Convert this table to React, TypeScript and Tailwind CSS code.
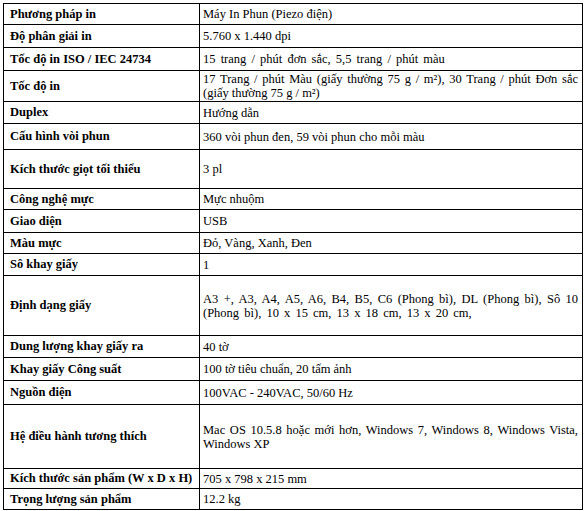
const rows: { label: string; h: string; value: React.ReactNode }[] = [
  { label: 'Phương pháp in', h: 'h-[21px]', value: 'Máy In Phun (Piezo điện)' },
  { label: 'Độ phân giải in', h: 'h-[23px]', value: '5.760 x 1.440 dpi' },
  {
    label: 'Tốc độ in ISO / IEC 24734',
    h: 'h-[23px]',
    value: <div className="[word-spacing:2px]">15 trang / phút đơn sắc, 5,5 trang / phút màu</div>,
  },
  {
    label: 'Tốc độ in',
    h: 'h-[31px]',
    value: (
      <>
        <div className="text-justify [text-align-last:justify]">17 Trang / phút Màu (giấy thường 75 g / m²), 30 Trang / phút Đơn sắc</div>
        <div>(giấy thường 75 g / m²)</div>
      </>
    ),
  },
  { label: 'Duplex', h: 'h-[22px]', value: 'Hướng dẫn' },
  { label: 'Cấu hình vòi phun', h: 'h-[26px]', value: '360 vòi phun đen, 59 vòi phun cho mỗi màu' },
  { label: 'Kích thước giọt tối thiểu', h: 'h-[39px]', value: '3 pl' },
  { label: 'Công nghệ mực', h: 'h-[21px]', value: 'Mực nhuộm' },
  { label: 'Giao diện', h: 'h-[23px]', value: 'USB' },
  { label: 'Màu mực', h: 'h-[21px]', value: 'Đỏ, Vàng, Xanh, Đen' },
  { label: 'Sô khay giấy', h: 'h-[22px]', value: '1' },
  {
    label: 'Định dạng giấy',
    h: 'h-[60px]',
    value: (
      <>
        <div className="text-justify [text-align-last:justify]">A3 +, A3, A4, A5, A6, B4, B5, C6 (Phong bì), DL (Phong bì), Sô 10</div>
        <div className="[word-spacing:2px]">(Phong bì), 10 x 15 cm, 13 x 18 cm, 13 x 20 cm,</div>
      </>
    ),
  },
  { label: 'Dung lượng khay giấy ra', h: 'h-[22px]', value: '40 tờ' },
  { label: 'Khay giấy Công suất', h: 'h-[23px]', value: '100 tờ tiêu chuẩn, 20 tấm ảnh' },
  { label: 'Nguồn điện', h: 'h-[24px]', value: '100VAC - 240VAC, 50/60 Hz' },
  {
    label: 'Hệ điều hành tương thích',
    h: 'h-[64px]',
    value: (
      <>
        <div className="text-justify [text-align-last:justify]">Mac OS 10.5.8 hoặc mới hơn, Windows 7, Windows 8, Windows Vista,</div>
        <div>Windows XP</div>
      </>
    ),
  },
  { label: 'Kích thước sản phẩm (W x D x H)', h: 'h-[20px]', value: '705 x 798 x 215 mm' },
  { label: 'Trọng lượng sản phẩm', h: 'h-[21px]', value: '12.2 kg' },
];

export default function App() {
  return (
    <div className="w-[585px] h-[511px] bg-white pt-[3px] pl-[3px] text-black font-['Liberation_Serif',serif] text-[12.5px]">
      <div className="w-[580px] border-x border-b border-black">
        {rows.map((r) => (
          <div key={r.label} className={`flex border-t border-black ${r.h}`}>
            <div className="w-[196px] shrink-0 border-r border-black pl-[6px] flex items-center font-bold">
              {r.label}
            </div>
            <div className="flex-1 min-w-0 pl-[3px] pr-[4px] flex flex-col justify-center leading-[14px]">
              {r.value}
            </div>
          </div>
        ))}
      </div>
    </div>
  );
}
